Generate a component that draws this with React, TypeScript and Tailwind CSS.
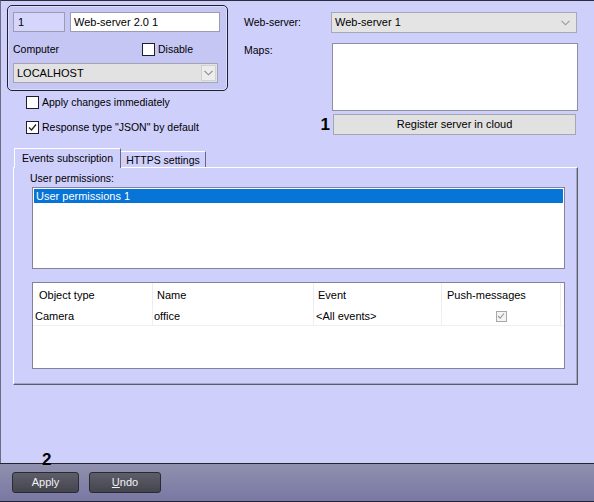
import React from "react";

const font = "font-['Liberation_Sans',Arial,sans-serif]";

function Check({ on = false, className = "" }: { on?: boolean; className?: string }) {
  return (
    <span className={"flex h-[13px] w-[13px] shrink-0 items-center justify-center border border-[#1e1e26] bg-white " + className}>
      {on && (
        <svg width="9" height="9" viewBox="0 0 9 9">
          <path d="M1 4.5 L3.5 7 L8 1.5" fill="none" stroke="#222" strokeWidth="1.3" />
        </svg>
      )}
    </span>
  );
}

function Chevron({ color = "#8a8a8a" }: { color?: string }) {
  return (
    <svg width="9" height="6" viewBox="0 0 9 6">
      <path d="M0.5 0.8 L4.5 4.8 L8.5 0.8" fill="none" stroke={color} strokeWidth="1.1" />
    </svg>
  );
}

function GroupBox() {
  return (
    <div className="h-[86px] w-[221px] rounded-[5px] border border-[#20202c] bg-[#c6c6f4] px-[5px] pt-[6px] shadow-[inset_0_0_0_1px_#dcdcff]">
      <div className="flex gap-[5px]">
        <div className="flex h-[20px] w-[52px] items-center border border-[#9c9cb0] bg-[#d6d6fc] px-[4px] text-[11px]">1</div>
        <div className="flex h-[20px] w-[150px] items-center border border-[#9c9cb0] bg-white px-[3px] text-[11px]">Web-server 2.0 1</div>
      </div>
      <div className="mt-[5px] flex h-[24px] items-center">
        <span className="w-[129px]">Computer</span>
        <Check />
        <span className="ml-[3px]">Disable</span>
      </div>
      <div className="mt-[2px] flex h-[20px] w-[205px] items-center justify-between border border-[#a4a4b4] bg-[#e2e2e2] pl-[3px] pr-[1px] text-[11px]">
        <span>LOCALHOST</span>
        <span className="flex h-[16px] w-[15px] items-center justify-center border border-[#d0d0d8] bg-[#ececec]">
          <Chevron />
        </span>
      </div>
    </div>
  );
}

function Button({ children, className = "" }: { children: React.ReactNode; className?: string }) {
  return (
    <div className={"flex h-[21px] items-center justify-center rounded-[3px] border border-[#2a2a33] bg-gradient-to-b from-[#5e5e6a] to-[#45454f] text-[11px] text-[#f2f2f2] " + className}>
      {children}
    </div>
  );
}

export default function App() {
  return (
    <div className={"relative flex h-[502px] w-[594px] flex-col overflow-hidden text-[10.5px] leading-[13px] text-black " + font}>
      <div className="h-[463px] border-t border-l border-t-[#2c2c3c] border-l-[#6c6c86] bg-[#cfcffc] pl-[6px] pt-[4px]">
        <div className="flex items-start">
          <div>
            <GroupBox />
            <div className="ml-[19px] mt-[5px] flex items-center">
              <Check />
              <span className="ml-[3px]">Apply changes immediately</span>
            </div>
            <div className="ml-[19px] mt-[12px] flex items-center">
              <Check on />
              <span className="ml-[3px]">Response type "JSON" by default</span>
            </div>
          </div>

          <div className="ml-[16px] w-[334px]">
            <div className="mt-[7px] flex items-center">
              <span className="w-[87px]">Web-server:</span>
              <div className="flex h-[21px] w-[246px] items-center justify-between border border-[#a8a8b4] bg-[#e4e4e4] pl-[3px] pr-[6px] text-[11px]">
                <span>Web-server 1</span>
                <Chevron color="#9a9a9a" />
              </div>
            </div>
            <div className="mt-[10px] flex items-start">
              <span className="w-[88px] pt-[1px]">Maps:</span>
              <div className="h-[68px] w-[246px] border border-[#8e8ea4] bg-white" />
            </div>
            <div className="mt-[3px] flex items-center">
              <span className="w-[89px] pr-[3px] text-right text-[17px] font-bold leading-[20px]">1</span>
              <div className="flex h-[21px] w-[243px] items-center justify-center border border-[#a6a6b0] bg-[#e1e1e1] text-[11px]">
                Register server in cloud
              </div>
            </div>
          </div>
        </div>

        <div className="ml-[6px] mt-[13px]">
          <div className="relative z-10 flex items-end">
            <div className="-mb-px ml-[1px] flex h-[20px] w-[107px] items-center justify-center border-l border-t border-r border-l-white border-t-white border-r-[#6a6a7e] bg-[#cfcffc]">
              Events subscription
            </div>
            <div className="flex h-[16px] w-[85px] items-center justify-center border-t border-r border-t-white border-r-[#6a6a7e] pt-[1px]">
              HTTPS settings
            </div>
          </div>
          <div className="h-[218px] w-[565px] border border-l-white border-t-white border-r-[#5c5c6c] border-b-[#5c5c6c] shadow-[inset_-1px_-1px_0_#a6a6c0] pt-[4px]">
            <div className="pl-[16px]">User permissions:</div>
            <div className="ml-[18px] mt-[2px] h-[82px] w-[533px] border border-[#82829a] bg-white p-px">
              <div className="flex h-[14px] items-center bg-[#0774d8] pl-[2px] text-[11px] text-white">User permissions 1</div>
            </div>
            <div className="ml-[18px] mt-[13px] h-[87px] w-[533px] border border-[#82829a] bg-white text-[11px]">
              <div className="flex h-[24px] items-center">
                <div className="flex h-full w-[120px] items-center border-r border-[#ececec] pl-[6px]">Object type</div>
                <div className="flex h-full w-[161px] items-center border-r border-[#ececec] pl-[4px]">Name</div>
                <div className="flex h-full w-[128px] items-center border-r border-[#ececec] pl-[4px]">Event</div>
                <div className="flex h-full w-[119px] items-center border-r border-[#ececec] pl-[5px]">Push-messages</div>
              </div>
              <div className="flex h-[19px] items-center border-b border-[#f0f0f0]">
                <div className="flex h-full w-[120px] items-center border-r border-[#f0f0f0] pl-[2px]">Camera</div>
                <div className="flex h-full w-[161px] items-center border-r border-[#f0f0f0] pl-[1px]">office</div>
                <div className="flex h-full w-[128px] items-center border-r border-[#f0f0f0] pl-[2px]">&lt;All events&gt;</div>
                <div className="flex h-full w-[119px] items-center justify-center border-r border-[#f0f0f0]">
                  <span className="flex h-[11px] w-[11px] items-center justify-center border border-[#a8a8a8] bg-[#f4f4f4]">
                    <svg width="8" height="8" viewBox="0 0 8 8">
                      <path d="M1 4 L3.2 6.2 L7 1.5" fill="none" stroke="#9a9a9a" strokeWidth="1.1" />
                    </svg>
                  </span>
                </div>
              </div>
            </div>
          </div>
        </div>
      </div>

      <div className="flex h-[39px] gap-[10px] border-t border-b border-[#24242e] bg-gradient-to-b from-[#9090ae] to-[#7878a4] pl-[12px] pt-[8px]">
        <Button className="w-[67px]">Apply</Button>
        <Button className="w-[72px]">
          <span>
            <span className="underline">U</span>ndo
          </span>
        </Button>
      </div>

      <span className="absolute left-[42px] top-[450px] text-[17px] font-bold leading-[20px]">2</span>
    </div>
  );
}
